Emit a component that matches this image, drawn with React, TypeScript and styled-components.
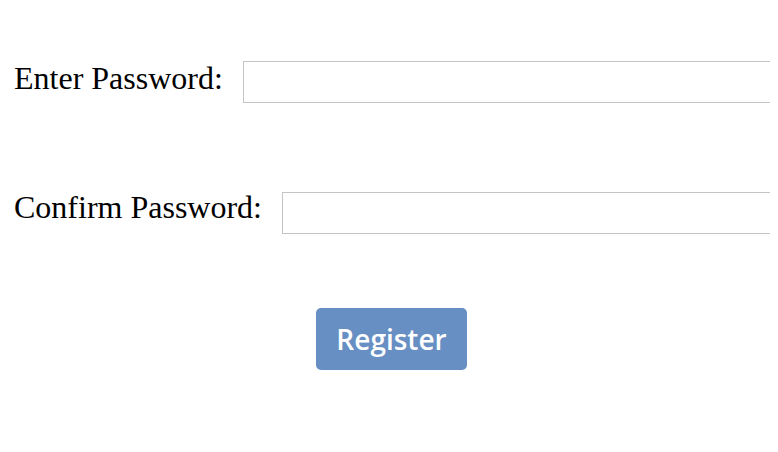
import React from "react";
import styled, { createGlobalStyle } from "styled-components";

const Global = createGlobalStyle`
  body {
    margin: 8px;
    background: #ffffff;
    font-family: "Liberation Serif", "Times New Roman", serif;
  }
`;

const Form = styled.form`
  display: flex;
  flex-direction: column;
  padding-top: 52px;
  overflow: hidden;
`;

const Row = styled.div<{ $mt: number }>`
  display: flex;
  align-items: flex-start;
  gap: 20px;
  margin-top: ${(p) => p.$mt}px;
  padding-left: 6px;
`;

const Label = styled.label`
  font-size: 32px;
  line-height: 36px;
  color: #000;
  white-space: nowrap;
  flex: none;
`;

const Input = styled.input<{ $mt: number }>`
  flex: none;
  width: 700px;
  height: 42px;
  box-sizing: border-box;
  margin: ${(p) => p.$mt}px 0 0 0;
  border: 1px solid #c4c4c4;
  padding: 0 8px;
  font-size: 20px;
  outline: none;
`;

const Button = styled.button`
  align-self: flex-start;
  margin: 74px 0 0 308px;
  width: 151px;
  height: 62px;
  border: none;
  border-radius: 5px;
  background: #678fc3;
  color: #ffffff;
  font-family: "Open Sans", sans-serif;
  font-weight: 600;
  font-size: 28px;
  cursor: pointer;
  padding: 0;
`;

export default function App() {
  return (
    <>
      <Global />
      <Form onSubmit={(e) => e.preventDefault()}>
        <Row $mt={0}>
          <Label htmlFor="pw">Enter Password:</Label>
          <Input id="pw" type="password" $mt={1} />
        </Row>
        <Row $mt={86}>
          <Label htmlFor="cpw">Confirm Password:</Label>
          <Input id="cpw" type="password" $mt={3} />
        </Row>
        <Button type="submit">Register</Button>
      </Form>
    </>
  );
}
